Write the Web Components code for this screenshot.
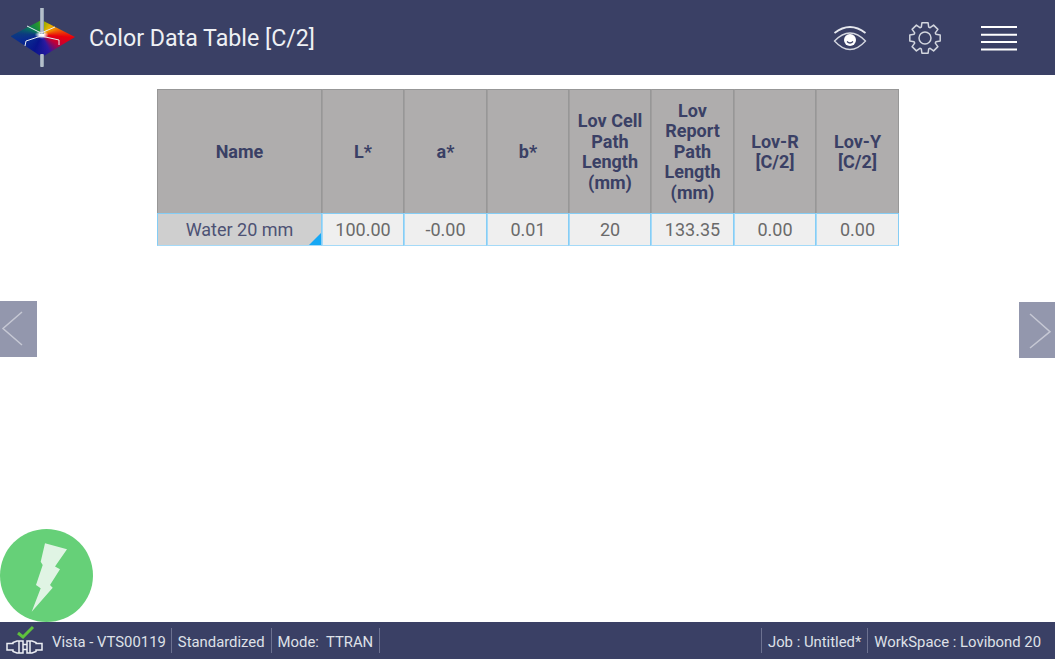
<!DOCTYPE html>
<html lang="en"><head><meta charset="utf-8"><title>Color Data Table</title>
<style>
html,body{margin:0;height:100%;background:#fff;font-family:Roboto,"Liberation Sans",sans-serif}
body{overflow:hidden}
app-shell{height:100vh}
</style></head><body>
<app-shell>
  <app-header slot="header" title-text="Color Data Table [C/2]"></app-header>
  <color-table></color-table>
  <nav-arrow dir="left"></nav-arrow>
  <nav-arrow dir="right"></nav-arrow>
  <power-fab></power-fab>
  <status-bar slot="footer"></status-bar>
</app-shell>
<script>
function def(name, html, init){
  customElements.define(name, class extends HTMLElement{
    constructor(){super();this.attachShadow({mode:'open'}).innerHTML=typeof html==='function'?html(this):html;}
    connectedCallback(){init&&init(this);}
  });
}
def('app-shell',`<style>:host{display:flex;flex-direction:column;position:relative;width:100%}
main{flex:1;min-height:0;display:flex;flex-direction:column;align-items:flex-start;padding:14px 0 0 157px}</style>
<slot name="header"></slot><main><slot></slot></main><slot name="footer"></slot>`);

def('app-logo',`<style>:host{display:block;position:relative;width:85px;height:75px;flex:none}
.d{position:absolute;left:10.500px;top:20px;width:64.500px;height:37px;filter:blur(.4px);clip-path:polygon(0 44%,48% 0,100% 46%,49% 100%);
background:radial-gradient(ellipse 7px 4px at 48% 40%,#fff 0,#fff 30%,rgba(255,255,255,0) 100%),conic-gradient(from 0deg at 48% 40%,#7fa800 0deg,#e8b400 45deg,#f08000 68deg,#e8000c 95deg,#c00038 120deg,#2a1aa0 155deg,#08148c 205deg,#0a2c90 255deg,#0c3a80 272deg,#087a58 298deg,#2a9a28 345deg,#7fa800 360deg)}
svg{position:absolute;left:0;top:0}</style>
<div class="d"></div>
<svg width="85" height="75" viewBox="0 0 85 75" fill="none">
<defs><linearGradient id="p" x1="0" x2="1" y1="0" y2="0"><stop offset="0" stop-color="#8c9cb0"/><stop offset=".5" stop-color="#c4ccd4"/><stop offset="1" stop-color="#8494a8"/></linearGradient></defs>
<rect x="40" y="8" width="4" height="26" fill="url(#p)"/><rect x="40" y="54" width="4" height="13" rx="1" fill="url(#p)"/>
<path d="M27 26L41 33L55 27M41 36L26 41L25 46M41 36L59 40V45" stroke="#e8eef0" stroke-width="1"/>
</svg>`);

def('app-header',el=>{
  const teeth=8,cx=115,cy=38;
  let d='';
  for(let i=0;i<teeth;i++){
    const a=i*Math.PI*2/teeth-Math.PI/2;
    const p=(r,o)=>[(cx+r*Math.cos(a+o)).toFixed(1),(cy+r*Math.sin(a+o)).toFixed(1)].join(' ');
    d+=(i?'L':'M')+p(11.5,-0.33)+'L'+p(15.5,-0.2)+'L'+p(15.5,0.2)+'L'+p(11.5,0.33);
  }
  d+='Z';
  return `<style>:host{display:flex;align-items:center;height:75px;background:#3a4065;color:#eef0f4;flex:none}
h1{margin:0;font:400 23.200px/1 Roboto,"Liberation Sans",sans-serif;margin-left:4px;padding-top:2px;flex:1;white-space:nowrap}
svg{display:block;flex:none}</style>
<app-logo></app-logo><h1>${el.getAttribute('title-text')}</h1>
<svg width="245" height="75" viewBox="0 0 245 75" fill="none">
<path d="M24.500 33Q40 21 55.500 33" stroke="#e6e8ee" stroke-width="1.800"/>
<path d="M24.500 41Q40 25 55.500 41Q40 58 24.500 41Z" stroke="#d4d7e0" stroke-width="1.300"/>
<circle cx="40" cy="40" r="6" fill="#fff"/><path d="M37 41.500Q40 44.500 43 41.500" stroke="#3a4065" stroke-width="1.300"/>
<path d="${d}" stroke="#d2d5de" stroke-width="1.500" stroke-linejoin="round"/>
<circle cx="${cx}" cy="${cy}" r="6" stroke="#d2d5de" stroke-width="1.500"/>
<path d="M171 27H207M171 34.800H207M171 42H207M171 49.500H207" stroke="#fff" stroke-width="2"/>
</svg>`;
});

const heads=['Name','L*','a*','b*','Lov Cell<br>Path<br>Length<br>(mm)','Lov<br>Report<br>Path<br>Length<br>(mm)','Lov-R<br>[C/2]','Lov-Y<br>[C/2]'];
const vals=['Water 20 mm','100.00','-0.00','0.01','20','133.35','0.00','0.00'];
def('color-table',`<style>:host{display:grid;grid-template-columns:165px 82px 83px 82px 82px 83px 82px 83px;grid-template-rows:124px 33px;font:18px/20.500px Roboto,"Liberation Sans",sans-serif;flex:none;width:742px}
.h{background:#afadad;color:#3a4065;font-weight:700;display:flex;align-items:center;justify-content:center;text-align:center;box-sizing:border-box;border-top:1px solid #979797;border-right:1px solid #979797;border-left:1px solid #a09e9e;padding-top:1px}
.h:first-of-type{border-left-color:#979797}
.c{background:#efefef;color:#6a6a6a;display:flex;align-items:center;justify-content:center;box-sizing:border-box;border-right:1px solid #85cdf5;border-left:1px solid #a5daf8;border-top:1px solid #85cdf5;border-bottom:1px solid #a5daf8;padding-top:1px}
.c.n{background:#cfcfcf;color:#4d5274;border-left-color:#85cdf5;position:relative}
.n::after{content:"";position:absolute;right:0;bottom:0;border:6px solid transparent;border-right-color:#16a8f5;border-bottom-color:#16a8f5}</style>
${heads.map(h=>`<div class="h">${h}</div>`).join('')}${vals.map((v,i)=>`<div class="c${i?'':' n'}">${v}</div>`).join('')}`);

def('nav-arrow',el=>{
  const left=el.getAttribute('dir')==='left';
  return `<style>:host{position:absolute;${left?'left:0;top:301px;width:37px;height:56px':'right:0;top:302px;width:36px;height:56px'};background:#9397ad;display:block}
svg{display:block}</style><svg width="${left?37:36}" height="56" viewBox="0 0 ${left?37:36} 56" fill="none">
<path d="${left?'M22 11L3 27.500L22 44':'M11 12L31 29.700L11 46'}" stroke="#c6c8d4" stroke-width="1.500"/></svg>`;
});

def('power-fab',`<style>:host{position:absolute;left:0;top:529px;width:93px;height:93px;border-radius:50%;background:#66d078;display:block}
svg{display:block}</style><svg width="93" height="93" viewBox="0 0 93 93">
<path d="M45 14.300L67 20.300L55 37.600L60 40.300L50 56L52.700 58.700L31.700 82.700L40.700 59.300L36 56L42.700 36L40.700 32.700Z" fill="#e0f4e4"/></svg>`);

def('status-sep',`<style>:host{display:block;width:1px;height:25px;background:#6c7190;flex:none}</style>`);
def('status-bar',`<style>:host{display:flex;align-items:center;height:37px;background:#3a4065;color:#dfe1e8;font:14.850px/1 Roboto,"Liberation Sans",sans-serif;white-space:nowrap;flex:none}
svg{display:block;flex:none}
.g{display:flex;align-items:center;height:100%}
.sp{flex:1}
span{padding:4px 6px 0}
.first{padding-left:0;padding-right:5px}
.right{padding-right:14px}</style>
<div class="g"><svg width="52" height="37" viewBox="0 0 52 37" fill="none">
<path d="M18 11L23 15L33 5" stroke="#5fc13d" stroke-width="3"/>
<g stroke="#eceef4" stroke-width="1.500"><path d="M7 21.500H13V20.500L17 19H23V31H17L13 29.500V28H7Z"/><path d="M42 21.500H36V20.500L32 19H27V31H32L36 29.500V28H42Z"/>
<path d="M23 22.500H27M23 27.500H27"/><path d="M19 19V31M30 19V31"/></g></svg>
<span class="first">Vista - VTS00119</span><status-sep></status-sep><span>Standardized</span><status-sep></status-sep><span>Mode:&nbsp; TTRAN</span><status-sep></status-sep></div>
<div class="sp"></div>
<div class="g"><status-sep></status-sep><span>Job : Untitled*</span><status-sep></status-sep><span class="right">WorkSpace : Lovibond 20</span></div>`);
</script>
</body></html>
